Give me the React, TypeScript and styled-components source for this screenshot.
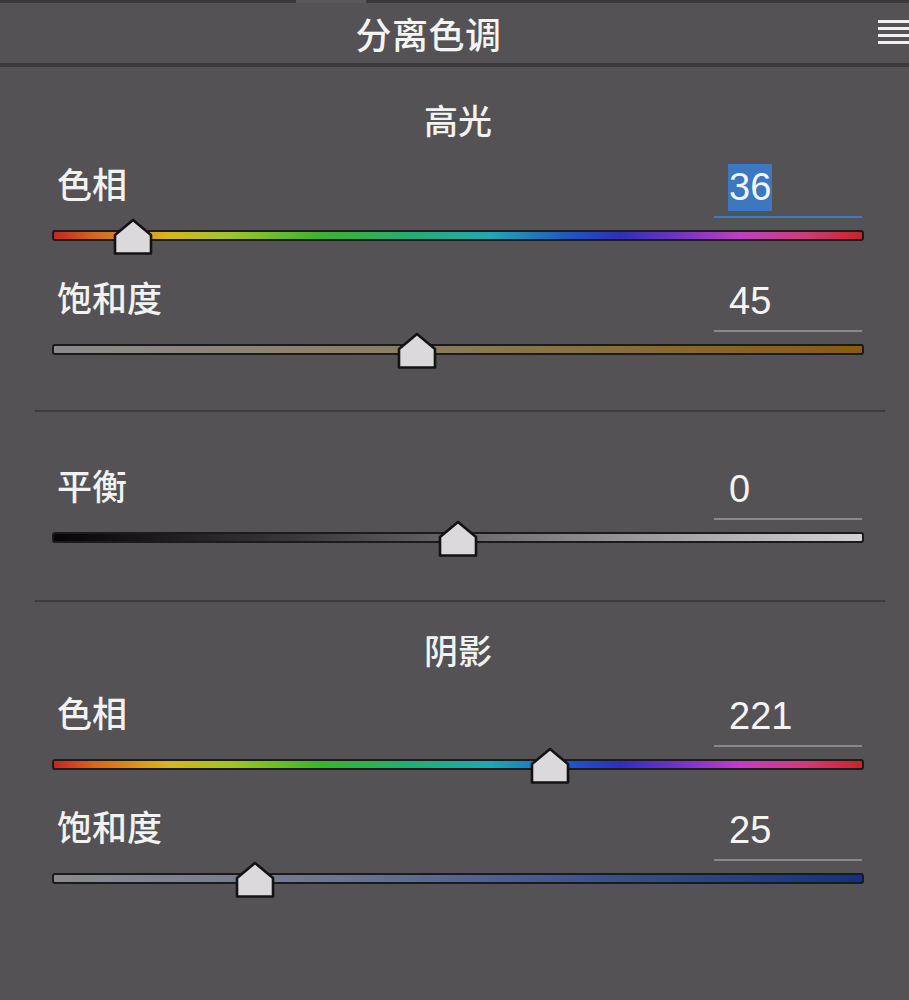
import styled, { createGlobalStyle } from 'styled-components'

const TRACK_WIDTH = 812

interface SliderDef {
  label: string
  value: number
  min: number
  max: number
  track: string
  focused?: boolean
}

const HUE = 'linear-gradient(to right, #c8251f 0%, #d8661c 5%, #d9b51e 14%, #9ec625 22%, #3cb42c 33%, #22ae72 44%, #1ea9b4 54%, #1c5dc4 63%, #2b2fbf 70%, #7a34c8 78%, #c13ec4 85%, #d13a7a 93%, #cc2227 100%)'

const GlobalStyle = createGlobalStyle`
  html, body {
    margin: 0;
    padding: 0;
    background: #545254;
  }
  body {
    font-family: "Noto Sans CJK SC", "Noto Sans", sans-serif;
    color: #f2f2f2;
  }
`

const Panel = styled.div`
  width: 909px;
  height: 1000px;
  background: #545254;
  display: flex;
  flex-direction: column;
  overflow: hidden;
`

const TopStrip = styled.div`
  display: flex;
  height: 3px;
`

const StripPiece = styled.div<{ $w?: number; $light?: boolean }>`
  ${(p) => (p.$w ? `width: ${p.$w}px;` : 'flex: 1;')}
  background: ${(p) => (p.$light ? '#5a585a' : '#3a393a')};
`

const Header = styled.div`
  display: flex;
  align-items: center;
  height: 60px;
  border-bottom: 4px solid #3a393b;
  position: relative;
`

const Title = styled.h1`
  margin: 0;
  width: 100%;
  padding-right: 52px;
  text-align: center;
  font-size: 36px;
  font-weight: 500;
  letter-spacing: 0.5px;
  color: #f4f4f4;
`

const MenuIcon = styled.div`
  position: absolute;
  right: 0;
  top: 17px;
  width: 31px;
  display: flex;
  flex-direction: column;
  gap: 4px;
`

const MenuLine = styled.span`
  display: block;
  height: 3px;
  background: #f0f0f0;
`

const Body = styled.div`
  display: flex;
  flex-direction: column;
  padding: 0 45px 0 52px;
`

const SectionTitle = styled.div<{ $top: number; $bottom: number }>`
  text-align: center;
  font-size: 34px;
  line-height: 40px;
  font-weight: 500;
  margin-top: ${(p) => p.$top}px;
  margin-bottom: ${(p) => p.$bottom}px;
`

const Divider = styled.div<{ $top: number }>`
  height: 2px;
  margin: ${(p) => p.$top}px -21px 0 -17px;
  background: #3d3b3e;
`

const Block = styled.div<{ $gap?: number }>`
  display: flex;
  flex-direction: column;
  margin-top: ${(p) => p.$gap ?? 0}px;
`

const LabelRow = styled.div`
  display: flex;
  align-items: center;
  justify-content: space-between;
  height: 52px;
`

const Label = styled.span`
  padding-left: 5px;
  margin-top: -19px;
  font-size: 35px;
  font-weight: 500;
  line-height: 40px;
`

const ValueBox = styled.div<{ $focused?: boolean }>`
  width: 148px;
  height: 52px;
  margin-right: 2px;
  box-sizing: border-box;
  padding-left: 14px;
  border-bottom: 2px solid ${(p) => (p.$focused ? '#3a78c8' : '#8b898c')};
  display: flex;
  align-items: flex-start;
`

const ValueText = styled.span<{ $focused?: boolean }>`
  font-family: "Liberation Sans", Arial, sans-serif;
  font-size: 38px;
  line-height: 47px;
  margin-top: -2px;
  padding: 0 1px;
  color: #f4f4f4;
  background: ${(p) => (p.$focused ? '#3c78c0' : 'transparent')};
`

const TrackArea = styled.div`
  position: relative;
  height: 33px;
`

const Track = styled.div<{ $bg: string }>`
  position: absolute;
  left: 0;
  right: 0;
  top: 12px;
  height: 7px;
  border: 2px solid #1c1b1c;
  border-radius: 3px;
  background: ${(p) => p.$bg};
`

const Thumb = styled.svg`
  position: absolute;
  top: -1px;
  width: 42px;
  height: 39px;
  margin-left: -21px;
`

const sliderLeft = (s: SliderDef) => ((s.value - s.min) / (s.max - s.min)) * TRACK_WIDTH

const Slider = ({ s, gap }: { s: SliderDef; gap?: number }) => (
  <Block $gap={gap}>
    <LabelRow>
      <Label>{s.label}</Label>
      <ValueBox $focused={s.focused}>
        <ValueText $focused={s.focused}>{s.value}</ValueText>
      </ValueBox>
    </LabelRow>
    <TrackArea>
      <Track $bg={s.track} />
      <Thumb viewBox="0 0 42 39" style={{ left: sliderLeft(s) }}>
        <path d="M21 3 L39 18 L39 36.5 L3 36.5 L3 18 Z" fill="#dbd9dc" stroke="#141314" strokeWidth="2.6" strokeLinejoin="round" />
      </Thumb>
    </TrackArea>
  </Block>
)

const highlights: SliderDef[] = [
  { label: '色相', value: 36, min: 0, max: 360, track: HUE, focused: true },
  { label: '饱和度', value: 45, min: 0, max: 100, track: 'linear-gradient(to right, #8b8a8c 0%, #8b8064 40%, #8a6a2c 75%, #8a5a12 100%)' },
]

const balance: SliderDef = { label: '平衡', value: 0, min: -100, max: 100, track: 'linear-gradient(to right, #050505 0%, #3a393a 30%, #8a898a 65%, #d2d2d4 100%)' }

const shadows: SliderDef[] = [
  { label: '色相', value: 221, min: 0, max: 360, track: HUE },
  { label: '饱和度', value: 25, min: 0, max: 100, track: 'linear-gradient(to right, #8b8b8d 0%, #6c7590 35%, #3a4e8c 70%, #152f86 100%)' },
]

export default function App() {
  return (
    <>
      <GlobalStyle />
      <Panel>
        <TopStrip>
          <StripPiece $w={296} />
          <StripPiece $w={70} $light />
          <StripPiece />
        </TopStrip>
        <Header>
          <Title>分离色调</Title>
          <MenuIcon>
            <MenuLine />
            <MenuLine />
            <MenuLine />
            <MenuLine />
          </MenuIcon>
        </Header>
        <Body>
          <SectionTitle $top={33} $bottom={26}>高光</SectionTitle>
          {highlights.map((s, i) => (
            <Slider key={i} s={s} gap={i === 0 ? 0 : 29} />
          ))}
          <Divider $top={45} />
          <Slider s={balance} gap={56} />
          <Divider $top={47} />
          <SectionTitle $top={28} $bottom={25}>阴影</SectionTitle>
          {shadows.map((s, i) => (
            <Slider key={i} s={s} gap={i === 0 ? 0 : 29} />
          ))}
        </Body>
      </Panel>
    </>
  )
}
